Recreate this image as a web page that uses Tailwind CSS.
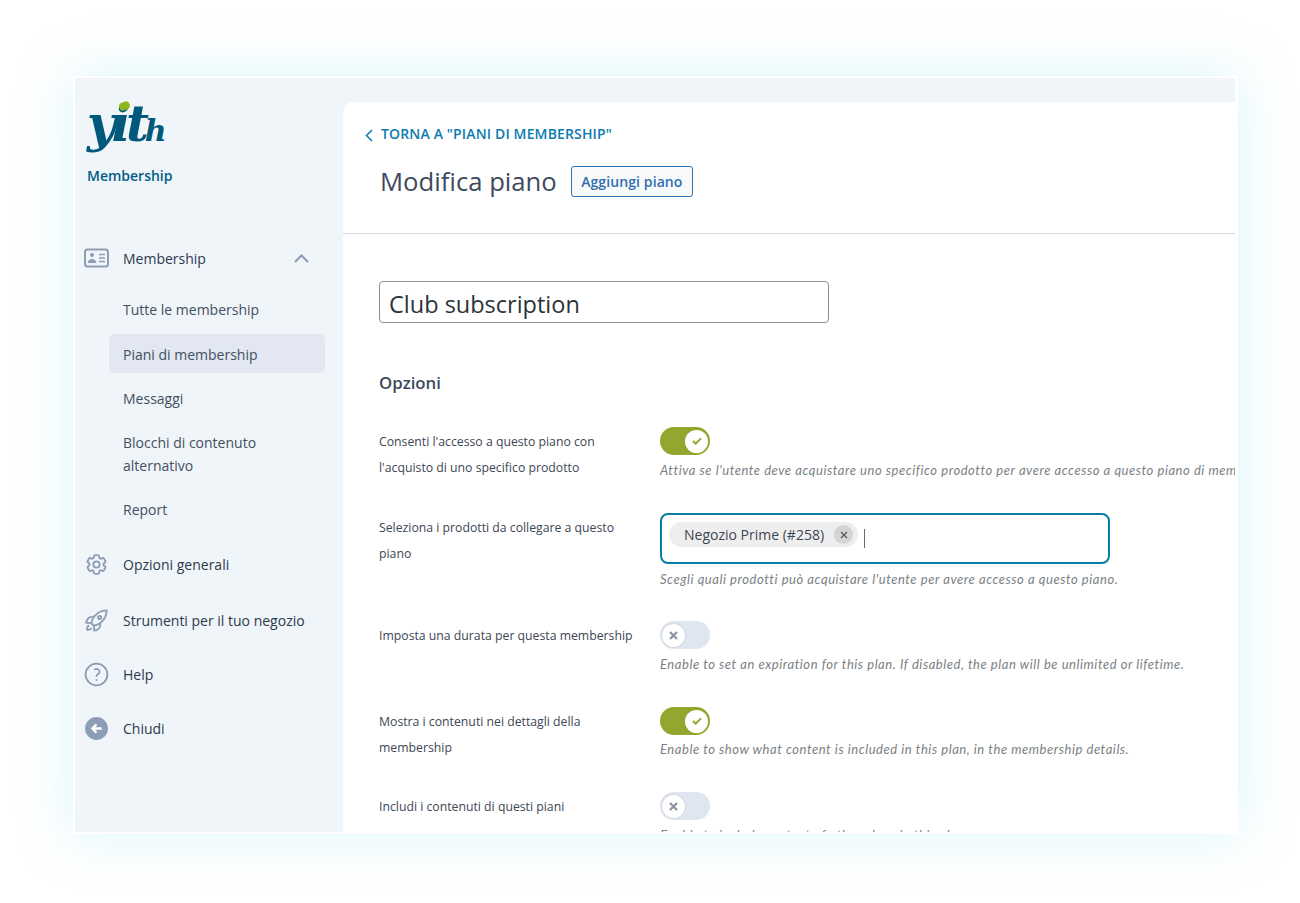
<!DOCTYPE html>
<html lang="en">
<head>
    <meta charset="UTF-8">
    <meta name="viewport" content="width=device-width, initial-scale=1.0">
    <title>Modifica piano</title>
    <script src="https://cdn.jsdelivr.net/npm/@tailwindcss/browser@4"></script>
</head>
<body class="bg-white h-[903px] overflow-hidden font-['Open_Sans',sans-serif]">
    <div class="ml-[73px] mt-[76px] w-[1165px] h-[758px] border-2 border-r-[3px] border-white shadow-[0_0_50px_rgba(150,225,235,0.35)] flex overflow-hidden bg-[#f0f5fa]">

        <!-- sidebar -->
        <aside class="w-[268px] shrink-0 text-[14px] text-[#2c3a4d]">
            <div class="relative h-[150px] pl-[12px] pt-[12px]">
                <div class="relative h-[64px] font-['DejaVu_Serif',serif] font-bold italic text-[50px] leading-[68px] text-[#00597a] tracking-[-4.5px]">yit<span class="text-[30px] tracking-normal">h</span>
                    <span class="absolute left-[32px] top-[12px] w-[11px] h-[8px] rounded-full bg-[#8fb81c] -rotate-20"></span>
                </div>
                <p class="mt-[12px] text-[14px] font-semibold text-[#005f85] leading-[20px]">Membership</p>
            </div>

            <nav class="mt-[20px]">
                <a class="flex items-center h-[20px] pl-[9px] pr-[34px]">
                    <svg class="w-[25px] h-[20px]" viewBox="0 0 25 20" fill="none" stroke="#8d9db5" stroke-width="2"><rect x="1" y="1.5" width="23" height="17" rx="2.5"/><circle cx="8" cy="7" r="2" fill="#8d9db5" stroke="none"/><path d="M4 14.5c.3-4 7.7-4 8 0z" fill="#8d9db5" stroke-width="1"/><path d="M15 6.5h6M15 10h6M15 13.5h6" stroke-width="1.7"/></svg>
                    <span class="ml-[14px] flex-1">Membership</span>
                    <svg class="w-[15px] h-[9px]" viewBox="0 0 15 9" fill="none" stroke="#8d9db5" stroke-width="2"><path d="M1 8l6.5-6.5L14 8"/></svg>
                </a>
                <ul class="mt-[22px] ml-[34px] w-[216px] text-[#434f60]">
                    <li class="h-[39px] pl-[14px] flex items-center mb-[5px]">Tutte le membership</li>
                    <li class="h-[39px] pl-[14px] pt-[2px] flex items-center mb-[6px] bg-[#e2e7f1] rounded-[5px]">Piani di membership</li>
                    <li class="h-[39px] pl-[14px] flex items-center mb-[13px]">Messaggi</li>
                    <li class="pl-[14px] leading-[23px] mb-[13px]">Blocchi di contenuto<br>alternativo</li>
                    <li class="h-[39px] pl-[14px] flex items-center">Report</li>
                </ul>
                <a class="flex items-center h-[24px] pl-[9px] mt-[23px]">
                    <svg class="w-[25px] h-[25px]" viewBox="0 0 24 24" fill="none" stroke="#8d9db5" stroke-width="1.8"><path d="M9.594 3.94c.09-.542.56-.94 1.11-.94h2.593c.55 0 1.02.398 1.11.94l.213 1.281c.063.374.313.686.645.87.074.04.147.083.22.127.325.196.72.257 1.075.124l1.217-.456a1.125 1.125 0 0 1 1.37.49l1.296 2.247a1.125 1.125 0 0 1-.26 1.431l-1.003.827c-.293.241-.438.613-.43.992a7.723 7.723 0 0 1 0 .255c-.008.378.137.75.43.991l1.004.827c.424.35.534.955.26 1.43l-1.298 2.247a1.125 1.125 0 0 1-1.369.491l-1.217-.456c-.355-.133-.75-.072-1.076.124a6.47 6.47 0 0 1-.22.128c-.331.183-.581.495-.644.869l-.213 1.281c-.09.543-.56.94-1.11.94h-2.594c-.55 0-1.019-.398-1.11-.94l-.213-1.281c-.062-.374-.312-.686-.644-.87a6.52 6.52 0 0 1-.22-.127c-.325-.196-.72-.257-1.076-.124l-1.217.456a1.125 1.125 0 0 1-1.369-.49l-1.297-2.247a1.125 1.125 0 0 1 .26-1.431l1.004-.827c.292-.24.437-.613.43-.991a6.932 6.932 0 0 1 0-.255c.007-.38-.138-.751-.43-.992l-1.004-.827a1.125 1.125 0 0 1-.26-1.43l1.297-2.247a1.125 1.125 0 0 1 1.37-.491l1.216.456c.356.133.751.072 1.076-.124.072-.044.146-.086.22-.128.332-.183.582-.495.644-.869l.214-1.28Z"/><path d="M15 12a3 3 0 1 1-6 0 3 3 0 0 1 6 0Z"/></svg>
                    <span class="ml-[14px]">Opzioni generali</span>
                </a>
                <a class="flex items-center h-[24px] pl-[9px] mt-[32px]">
                    <svg class="w-[25px] h-[25px]" viewBox="0 0 24 24" fill="none" stroke="#8d9db5" stroke-width="1.8"><path d="M15.59 14.37a6 6 0 0 1-5.84 7.38v-4.8m5.84-2.58a14.98 14.98 0 0 0 6.16-12.12A14.98 14.98 0 0 0 9.631 8.41m5.96 5.96a14.926 14.926 0 0 1-5.841 2.58m-.119-8.54a6 6 0 0 0-7.381 5.84h4.8m2.581-5.84a14.927 14.927 0 0 0-2.58 5.84m2.699 2.7c-.103.021-.207.041-.311.06a15.09 15.09 0 0 1-2.448-2.448 14.9 14.9 0 0 1 .06-.312m-2.24 2.39a4.493 4.493 0 0 0-1.757 4.306 4.493 4.493 0 0 0 4.306-1.758M16.5 9a1.5 1.5 0 1 1-3 0 1.5 1.5 0 0 1 3 0Z"/></svg>
                    <span class="ml-[14px]">Strumenti per il tuo negozio</span>
                </a>
                <a class="flex items-center h-[24px] pl-[9px] mt-[30px]">
                    <svg class="w-[25px] h-[25px]" viewBox="0 0 24 24" fill="none" stroke="#8d9db5" stroke-width="1.7"><path d="M9.879 7.519c1.171-1.025 3.071-1.025 4.242 0 1.172 1.025 1.172 2.687 0 3.712-.203.179-.43.326-.67.442-.745.361-1.45.999-1.45 1.827v.75"/><circle cx="12" cy="12" r="10.5"/><path d="M12 17.25h.008v.008H12v-.008Z"/></svg>
                    <span class="ml-[14px]">Help</span>
                </a>
                <a class="flex items-center h-[24px] pl-[9px] mt-[30px]">
                    <svg class="w-[25px] h-[25px]" viewBox="0 0 24 24"><circle cx="12" cy="12" r="11" fill="#8d9db5"/><path d="M17 12H8M12 8l-4 4 4 4" fill="none" stroke="#fff" stroke-width="2.2"/></svg>
                    <span class="ml-[14px]">Chiudi</span>
                </a>
            </nav>
        </aside>

        <!-- main panel -->
        <main class="flex-1 min-w-0 mt-[24px] bg-white rounded-tl-[10px] overflow-hidden">
            <header class="h-[132px] border-b border-[#d5dae0] pl-[22px] pt-[22px]">
                <a class="flex items-center text-[14px] leading-[20px] font-semibold tracking-[0.15px] text-[#0a7cb0]">
                    <svg class="w-[8px] h-[13px] mt-[2px]" viewBox="0 0 8 13" fill="none" stroke="#0a7cb0" stroke-width="1.5"><path d="M7 1L1.5 6.5 7 12"/></svg>
                    <span class="ml-[8px]">TORNA A "PIANI DI MEMBERSHIP"</span>
                </a>
                <div class="flex items-center ml-[15px] mt-[22px]">
                    <h1 class="text-[25.7px] leading-[32px] text-[#3d4a5e]">Modifica piano</h1>
                    <button class="ml-[14px] w-[122px] h-[31px] -mt-[1px] border border-[#2d72b5] rounded-[3px] text-[14px] tracking-[0.1px] font-semibold text-[#2f6fae] bg-[#f8f9fa]">Aggiungi piano</button>
                </div>
            </header>

            <section class="pl-[36px]">
                <input type="text" value="Club subscription" class="mt-[47px] w-[450px] h-[42px] px-[9px] pt-[3px] border border-[#8c8f94] rounded-[4px] text-[23.5px] text-[#2c3338]">
                <h2 class="mt-[48px] text-[16.8px] leading-[24px] font-semibold text-[#3d4a5e]">Opzioni</h2>

                <div class="mt-[32px] flex h-[86px]">
                    <label class="w-[281px] shrink-0 pr-[20px] text-[12.25px] leading-[26px] text-[#3d4654] pt-[2px]">Consenti l'accesso a questo piano con l'acquisto di uno specifico prodotto</label>
                    <div>
                        <div class="w-[50px] h-[28px] rounded-full bg-[#94a62e] flex items-center justify-end pr-[2px]">
                            <span class="w-[23px] h-[23px] rounded-full bg-white flex items-center justify-center"><svg class="w-[10px] h-[8px]" viewBox="0 0 11 9" fill="none" stroke="#94a62e" stroke-width="2.2"><path d="M1 4.5l3 3 6-6"/></svg></span>
                        </div>
                        <p class="mt-[6px] font-['Lato',sans-serif] italic text-[13px] leading-[18px] tracking-[0.55px] text-[#7b7f84] whitespace-nowrap">Attiva se l'utente deve acquistare uno specifico prodotto per avere accesso a questo piano di membership.</p>
                    </div>
                </div>

                <div class="flex h-[108px]">
                    <label class="w-[281px] shrink-0 pr-[20px] text-[12.25px] leading-[26px] text-[#3d4654] pt-[2px]">Seleziona i prodotti da collegare a questo piano</label>
                    <div>
                        <div class="w-[450px] h-[51px] border-2 border-[#0a7ca5] rounded-[8px] flex items-start pl-[7px] pt-[7px]">
                            <span class="h-[25px] w-[189px] rounded-full bg-[#eeeeee] flex items-center pl-[15px] text-[14px] text-[#3d4654]">Negozio Prime (#258)
                                <span class="ml-[10px] w-[19px] h-[19px] rounded-full bg-[#d4d4d4] flex items-center justify-center"><svg class="w-[8px] h-[8px]" viewBox="0 0 8 8" fill="none" stroke="#555" stroke-width="1.2"><path d="M1 1l6 6M7 1L1 7"/></svg></span>
                            </span>
                            <span class="ml-[6px] mt-[7px] w-px h-[19px] bg-[#5f6b80]"></span>
                        </div>
                        <p class="mt-[6px] font-['Lato',sans-serif] italic text-[13px] leading-[18px] tracking-[0.55px] text-[#7b7f84] whitespace-nowrap">Scegli quali prodotti può acquistare l'utente per avere accesso a questo piano.</p>
                    </div>
                </div>

                <div class="flex h-[86px]">
                    <label class="w-[281px] shrink-0 pr-[20px] text-[12.25px] leading-[26px] text-[#3d4654] pt-[2px]">Imposta una durata per questa membership</label>
                    <div>
                        <div class="w-[50px] h-[28px] rounded-full bg-[#e0e6f0] flex items-center pl-[2px]">
                            <span class="w-[23px] h-[23px] rounded-full bg-white shadow-[0_0_2px_rgba(0,0,0,0.2)] flex items-center justify-center"><svg class="w-[9px] h-[9px]" viewBox="0 0 9 9" fill="none" stroke="#8a94a6" stroke-width="2.2"><path d="M1 1l7 7M8 1L1 8"/></svg></span>
                        </div>
                        <p class="mt-[6px] font-['Lato',sans-serif] italic text-[13px] leading-[18px] tracking-[0.55px] text-[#7b7f84] whitespace-nowrap">Enable to set an expiration for this plan. If disabled, the plan will be unlimited or lifetime.</p>
                    </div>
                </div>

                <div class="flex h-[85px]">
                    <label class="w-[281px] shrink-0 pr-[20px] text-[12.25px] leading-[26px] text-[#3d4654] pt-[2px]">Mostra i contenuti nei dettagli della membership</label>
                    <div>
                        <div class="w-[50px] h-[28px] rounded-full bg-[#94a62e] flex items-center justify-end pr-[2px]">
                            <span class="w-[23px] h-[23px] rounded-full bg-white flex items-center justify-center"><svg class="w-[10px] h-[8px]" viewBox="0 0 11 9" fill="none" stroke="#94a62e" stroke-width="2.2"><path d="M1 4.5l3 3 6-6"/></svg></span>
                        </div>
                        <p class="mt-[5px] font-['Lato',sans-serif] italic text-[13px] leading-[18px] tracking-[0.55px] text-[#7b7f84] whitespace-nowrap">Enable to show what content is included in this plan, in the membership details.</p>
                    </div>
                </div>

                <div class="flex h-[86px]">
                    <label class="w-[281px] shrink-0 pr-[20px] text-[12.25px] leading-[26px] text-[#3d4654] pt-[2px]">Includi i contenuti di questi piani</label>
                    <div>
                        <div class="w-[50px] h-[28px] rounded-full bg-[#e0e6f0] flex items-center pl-[2px]">
                            <span class="w-[23px] h-[23px] rounded-full bg-white shadow-[0_0_2px_rgba(0,0,0,0.2)] flex items-center justify-center"><svg class="w-[9px] h-[9px]" viewBox="0 0 9 9" fill="none" stroke="#8a94a6" stroke-width="2.2"><path d="M1 1l7 7M8 1L1 8"/></svg></span>
                        </div>
                        <p class="mt-[6px] font-['Lato',sans-serif] italic text-[13px] leading-[18px] tracking-[0.55px] text-[#7b7f84] whitespace-nowrap">Enable to include content of other plans in this plan.</p>
                    </div>
                </div>
            </section>
        </main>
    </div>
</body>
</html>
